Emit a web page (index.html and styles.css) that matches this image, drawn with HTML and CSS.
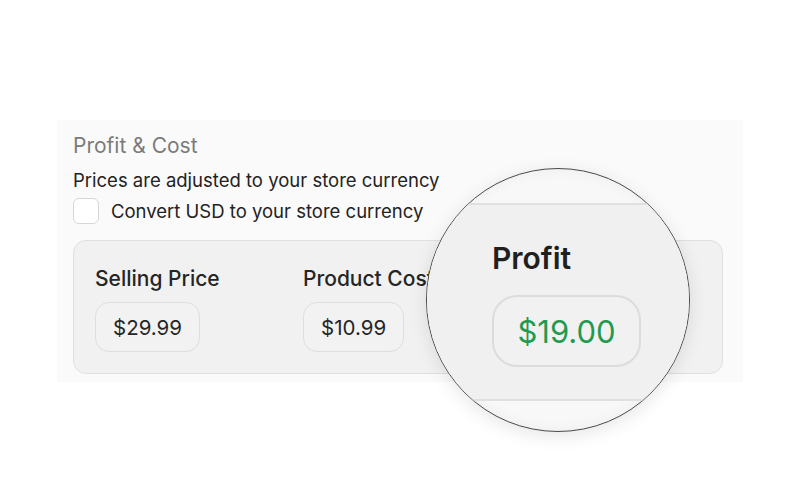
FILE: index.html
```html
<!DOCTYPE html>
<html>
<head>
<meta charset="utf-8">
<link rel="stylesheet" href="styles.css">
</head>
<body>
<div class="stage">
  <section class="panel">
    <h2 class="title">Profit &amp; Cost</h2>
    <p class="note">Prices are adjusted to your store currency</p>
    <label class="check"><span class="box"></span><span>Convert USD to your store currency</span></label>
    <div class="card">
      <div class="col">
        <div class="label">Selling Price</div>
        <div class="pill">$29.99</div>
      </div>
      <div class="col">
        <div class="label">Product Cost</div>
        <div class="pill">$10.99</div>
      </div>
    </div>
  </section>
  <div class="lens">
    <div class="lens-card">
      <div class="lens-label">Profit</div>
      <div class="lens-pill">$19.00</div>
    </div>
  </div>
</div>
</body>
</html>
```
FILE: styles.css
```css
* { box-sizing: border-box; }
html, body { margin: 0; padding: 0; background: #fff; }
body {
  font-family: Inter, "Noto Sans", "Liberation Sans", sans-serif;
  color: #222;
  width: 800px;
  height: 480px;
  overflow: hidden;
}
.stage { position: relative; width: 800px; height: 480px; padding: 120px 0 0 57px; }
.panel {
  width: 686px;
  height: 262px;
  background: #fafafa;
  padding: 13px 20px 0 16px;
}
.title {
  margin: 0;
  font-size: 21px;
  line-height: 26px;
  font-weight: 400;
  color: #7b7b7b;
}
.note {
  margin: 10px 0 0;
  font-size: 18.5px;
  line-height: 22px;
  color: #222;
}
.check {
  display: flex;
  align-items: center;
  gap: 12px;
  margin-top: 7px;
  font-size: 18.5px;
  line-height: 22px;
  color: #222;
}
.box {
  width: 26px;
  height: 26px;
  border: 1.5px solid #d6d6d6;
  border-radius: 6px;
  background: #fff;
}
.card {
  margin-top: 16px;
  height: 134px;
  background: #f1f1f1;
  border: 1.5px solid #e0e0e0;
  border-radius: 13px;
  display: flex;
  padding: 26px 0 0 21px;
}
.col { width: 208px; flex: none; }
.label {
  font-size: 21px;
  line-height: 24px;
  font-weight: 500;
  color: #252525;
}
.pill {
  display: inline-flex;
  align-items: center;
  justify-content: center;
  margin-top: 11px;
  height: 50px;
  padding: 0 17px;
  border: 1.5px solid #dedede;
  border-radius: 14px;
  background: #f2f2f2;
  font-size: 20.5px;
  color: #262626;
}
.lens {
  position: absolute;
  left: 426px;
  top: 168px;
  width: 264px;
  height: 264px;
  border-radius: 50%;
  border: 1px solid #4a4a4a;
  background: #f8f8f8;
  overflow: hidden;
  box-shadow: 0 4px 18px rgba(0,0,0,0.10), inset 0 0 14px rgba(0,0,0,0.05);
  padding-top: 34px;
}
.lens-card {
  height: 198px;
  background: #f0f0f0;
  border-top: 2px solid #e0e0e0;
  border-bottom: 2px solid #e0e0e0;
  padding: 36px 0 0 65px;
}
.lens-label {
  font-size: 30px;
  line-height: 34px;
  font-weight: 600;
  color: #1f1f1f;
}
.lens-pill {
  display: flex;
  align-items: center;
  justify-content: center;
  margin-top: 20px;
  width: 149px;
  height: 72px;
  border: 2px solid #dcdcdc;
  border-radius: 25px;
  background: #f1f1f1;
  font-size: 31px;
  color: #1f9a50;
}
```
